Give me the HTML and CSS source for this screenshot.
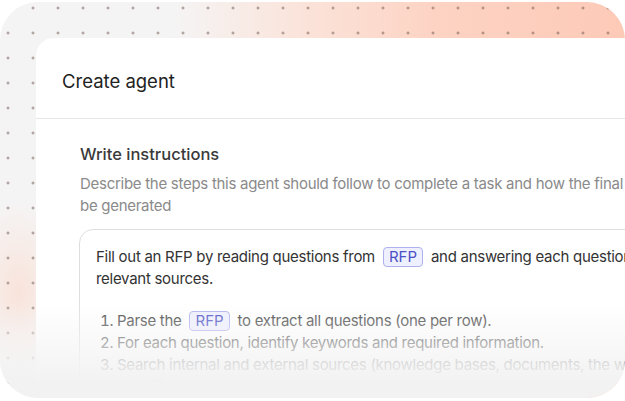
FILE: index.html
```html
<!DOCTYPE html>
<html lang="en">
<head>
  <meta charset="UTF-8" />
  <meta name="viewport" content="width=device-width, initial-scale=1.0"/>
  <title>Create agent</title>
  <link rel="stylesheet" href="styles.css">
</head>
<body>

  <div class="frame">
    <div class="card">
      <header class="card-head">
        <h1>Create agent</h1>
      </header>

      <section class="instructions">
        <h2>Write instructions</h2>
        <p class="hint">Describe the steps this agent should follow to complete a task and how the final output should<br>be generated</p>

        <div class="editor">
          <p>Fill out an RFP by reading questions from <span class="chip">RFP</span> and answering each question using<br>relevant sources.</p>
          <ol>
            <li>Parse the <span class="chip">RFP</span> to extract all questions (one per row).</li>
            <li>For each question, identify keywords and required information.</li>
            <li>Search internal and external sources (knowledge bases, documents, the web) for<br>identified keywords.</li>
          </ol>
        </div>
      </section>
    </div>
  </div>

</body>
</html>
```

FILE: styles.css
```css
body {
  font-family: Inter, "Noto Sans", sans-serif;
  margin: 0;
  background: #fff;
  color: #333;
}

.frame {
  position: relative;
  width: 625px;
  height: 396px;
  margin-top: 2px;
  border-radius: 38px;
  overflow: hidden;
  background:
    radial-gradient(circle, rgba(95, 70, 62, 0.6) 1px, transparent 1.4px) -4.5px -6.5px / 25px 25px,
    radial-gradient(ellipse 50px 90px at 18px 290px, rgba(251, 216, 202, 0.6), transparent),
    linear-gradient(90deg, #f5f4f4 28%, #fbe2d8 50%, #fdd3c3 70%, #fdcab7 100%);
}
.frame::after {
  content: "";
  position: absolute;
  left: 0;
  right: 0;
  bottom: 0;
  height: 96px;
  background: linear-gradient(to bottom, rgba(245, 245, 245, 0), rgba(245, 245, 245, 0.5) 35%, rgba(244, 244, 244, 0.85) 62%, #f2f2f2 85%);
}

.card {
  width: 720px;
  height: 344px;
  margin: 36px 0 0 36px;
  background: #fff;
  border-top-left-radius: 18px;
}

.card-head {
  height: 81px;
  box-sizing: border-box;
  display: flex;
  align-items: center;
  padding: 6px 0 0 26px;
  border-bottom: 1px solid #e6e6e6;
}
.card-head h1 {
  margin: 0;
  font-size: 18.5px;
  font-weight: 400;
  color: #222;
}

.instructions {
  padding: 23px 0 0 44px;
}
.instructions h2 {
  margin: 0;
  font-size: 16.5px;
  font-weight: 500;
  line-height: 24px;
  color: #3a3a3a;
}
.hint {
  margin: 7px 0 0;
  font-size: 15px;
  line-height: 22px;
  letter-spacing: -0.28px;
  color: #8a8a8a;
}

.editor {
  margin-top: 12px;
  margin-left: -1px;
  padding: 16px 16px 0;
  border: 1px solid #dedede;
  border-radius: 14px;
  font-size: 15px;
  line-height: 22px;
  letter-spacing: -0.28px;
  color: #333;
  height: 200px;
}
.editor p {
  margin: 0;
}
.editor ol {
  margin: 20px 0 0;
  padding-left: 21px;
  color: #444;
}

.chip {
  display: inline-block;
  padding: 0 5px;
  margin: 0 4px;
  line-height: 18px;
  letter-spacing: 0;
  border: 1px solid #aeb1ee;
  border-radius: 4px;
  background: #eef0ff;
  color: #4c50c4;
}
```
